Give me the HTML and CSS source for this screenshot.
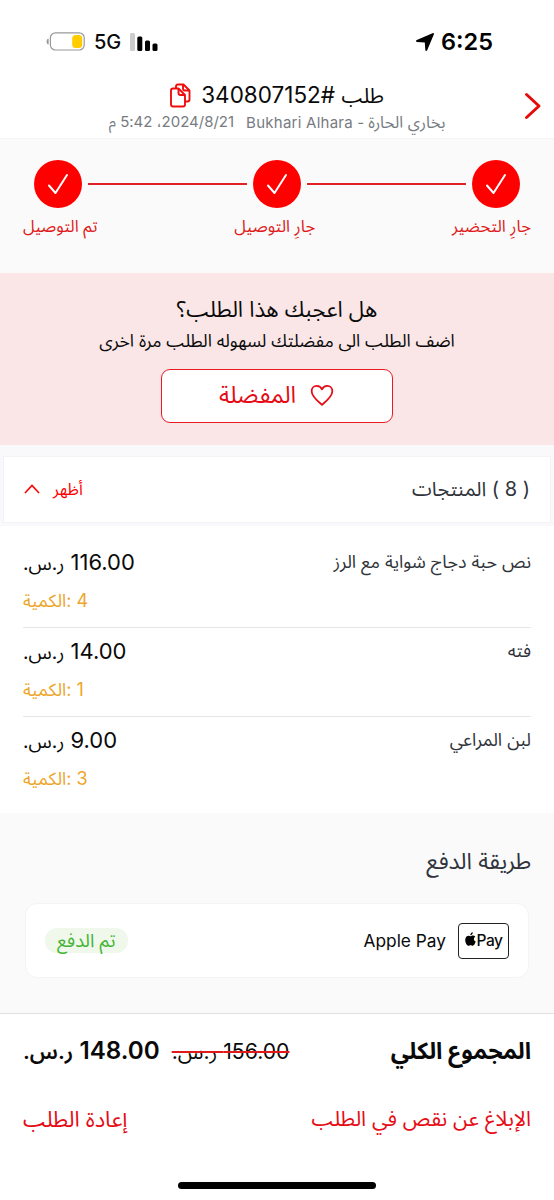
FILE: index.html
```html
<!DOCTYPE html>
<html lang="ar" dir="rtl">
<head>
<meta charset="utf-8">
<title>طلب #340807152</title>
<link rel="stylesheet" href="styles.css">
</head>
<body>
<div class="status">
  <div class="clock">
    <span>6:25</span>
    <svg width="20" height="20" viewBox="0 0 20 20"><path d="M17.500 1.200Q19.500.5 18.800 2.500L12.200 18.300Q11 20 10.300 18L9.800 10.600 2 10Q0 9.300 1.800 8.100Z"/></svg>
  </div>
  <div class="signal">
    <svg width="28" height="18" viewBox="0 0 28 18"><rect width="5" height="18" rx="1.5" fill="#ccc"/><rect x="7.3" y="3.5" width="5" height="14.5" rx="1.5"/><rect x="15" y="7.5" width="5" height="10.5" rx="1.5"/><rect x="22.5" y="10.5" width="5" height="7.5" rx="1.5"/></svg>
    <span class="net">5G</span>
    <svg width="39" height="19" viewBox="0 0 39 19"><rect x="4.400" y=".8" width="33.800" height="17.200" rx="5" fill="none" stroke="#999" stroke-width="1.200"/><rect x="26.200" y="3" width="10" height="13" rx="3.500" fill="#fc0"/><path d="M2.600 6.500v6Q.5 12 .5 9.500T2.600 6.500" fill="#999"/></svg>
  </div>
</div>

<header class="head">
  <svg class="back" width="18" height="28" viewBox="0 0 18 28"><path d="M2.500 2.500 15 14 2.500 25.500" fill="none" stroke="#e60b0b" stroke-width="3" stroke-linecap="round" stroke-linejoin="round"/></svg>
  <div class="title">
    <span><span class="t-word">طلب</span> #340807152</span>
    <svg width="21" height="25" viewBox="0 0 21 25" fill="none" stroke="#f20d0d" stroke-width="1.900" stroke-linejoin="round"><path d="M6 5V3.500Q6 1.500 8 1.500H13.500L19.500 7.500V16.500Q19.500 18.500 17.500 18.500H15"/><path d="M13 1.700V5.500Q13 7.500 15 7.500H19.500"/><path d="M3 5.500H8.500L15 12V21.500Q15 23.500 13 23.500H3Q1 23.500 1 21.500V7.500Q1 5.500 3 5.500Z"/><path d="M8.500 5.700V10Q8.500 12 10.500 12H15"/></svg>
  </div>
  <div class="sub"><span><span class="s-word">بخاري الحارة</span> - Bukhari Alhara</span><span class="date"><bdi dir="ltr">2024/8/21</bdi>، <bdi dir="ltr">5:42</bdi> م</span></div>
</header>

<section class="steps">
  <div class="track">
    <div class="dot"><svg width="22" height="22" viewBox="0 0 22 22"><path d="M2 12.500 8.500 20 20 2"/></svg></div>
    <div class="line"></div>
    <div class="dot"><svg width="22" height="22" viewBox="0 0 22 22"><path d="M2 12.500 8.500 20 20 2"/></svg></div>
    <div class="line"></div>
    <div class="dot"><svg width="22" height="22" viewBox="0 0 22 22"><path d="M2 12.500 8.500 20 20 2"/></svg></div>
  </div>
  <div class="labels"><span>جارِ التحضير</span><span>جارِ التوصيل</span><span>تم التوصيل</span></div>
</section>

<section class="fav">
  <h2 class="fav-q">هل اعجبك هذا الطلب؟</h2>
  <p class="fav-d">اضف الطلب الى مفضلتك لسهوله الطلب مرة اخرى</p>
  <div class="fav-btn">
    <svg width="24" height="23" viewBox="0 0 26 24"><path d="M13 22C10 19.500 1.800 13.500 1.800 7.500 1.800 4 4.200 1.700 7.300 1.700 10 1.700 12 3.300 13 5.300 14 3.300 16 1.700 18.700 1.700 21.800 1.700 24.200 4 24.200 7.500 24.200 13.500 16 19.500 13 22Z" fill="none" stroke="#e60b14" stroke-width="1.900" stroke-linejoin="round"/></svg>
    <span>المفضلة</span>
  </div>
</section>

<section class="prod-wrap">
  <div class="prod-head">
    <span class="prod-t">( 8 ) <span class="prod-w">المنتجات</span></span>
    <span class="show"><span>أظهر</span><svg width="16" height="10" viewBox="0 0 16 10"><path d="M1 9 8 1.500 15 9" fill="none" stroke="#f00" stroke-width="1.600"/></svg></span>
  </div>
</section>

<section class="items">
  <div class="item"><span class="name">نص حبة دجاج شواية مع الرز</span><div class="nums"><div class="price">116.00 <span class="cur">ر.س.</span></div><div class="qty">4 :<span class="q">الكمية</span></div></div></div>
  <div class="item"><span class="name">فته</span><div class="nums"><div class="price">14.00 <span class="cur">ر.س.</span></div><div class="qty">1 :<span class="q">الكمية</span></div></div></div>
  <div class="item"><span class="name">لبن المراعي</span><div class="nums"><div class="price">9.00 <span class="cur">ر.س.</span></div><div class="qty">3 :<span class="q">الكمية</span></div></div></div>
</section>

<section class="pay">
  <h3 class="pay-t">طريقة الدفع</h3>
  <div class="card">
    <div class="method">
      <div class="logo" dir="ltr"><svg width="11" height="14" viewBox="0 0 11 14"><path d="M7.800.3C7.900 1.900 6.700 3.200 5.300 3.200 5.200 1.800 6.400.5 7.800.3ZM10.300 4.700C8.300 5.900 8.600 8.700 10.800 9.600 10 11.900 8.900 13.700 7.700 13.700 6.900 13.700 6.600 13.200 5.600 13.200S4.300 13.700 3.600 13.700C2 13.700.2 10.600.2 7.900.2 5.200 1.900 3.700 3.600 3.700 4.500 3.700 5.200 4.200 5.700 4.200 6.200 4.200 7 3.600 8 3.600 8.900 3.600 9.700 4 10.300 4.700Z"/></svg><span>Pay</span></div>
      <span class="ap">Apple Pay</span>
    </div>
    <span class="paid">تم الدفع</span>
  </div>
</section>

<footer class="foot">
  <div class="total">
    <span class="tot-l">المجموع الكلي</span>
    <div class="sums"><span class="old">156.00 ر.س.</span><span class="new">148.00 <span class="newcur">ر.س.</span></span></div>
  </div>
  <div class="actions"><span class="a1">الإبلاغ عن نقص في الطلب</span><span class="a2">إعادة الطلب</span></div>
  <div class="home"></div>
</footer>
</body>
</html>
```
FILE: styles.css
```css
* { box-sizing: border-box; }
body { margin: 0; width: 554px; height: 1200px; overflow: hidden; background: #fff; color: #0a0a0a; font-family: Inter, "Noto Sans Arabic", "DejaVu Sans", sans-serif; }
h2, h3, p { margin: 0; font-weight: 400; }
svg { display: block; flex: none; }
span, div, h2, h3, p { white-space: nowrap; }

.status { height: 74px; padding: 26px 61px 0 46px; display: flex; justify-content: space-between; }
.clock { display: flex; align-items: center; gap: 6px; height: 31px; font-size: 23.500px; font-weight: 600; color: #000; }
.signal { display: flex; align-items: center; gap: 9px; height: 31px; }
.net { font-size: 20px; font-weight: 450; }

.head { position: relative; height: 65px; border-bottom: 1px solid #f5f5f5; }
.back { position: absolute; right: 12px; top: 18px; }
.title { display: flex; justify-content: center; align-items: center; gap: 10px; height: 34px; padding: 8px 0 0 0; font-size: 22.500px; line-height: 30px; }
.t-word { font-size: 20.500px; }
.sub { display: flex; justify-content: center; gap: 12px; font-size: 15px; line-height: 28px; color: #777b82; letter-spacing: .25px; }
.s-word { font-size: 16.200px; letter-spacing: 0; }
.date { letter-spacing: .6px; }

.steps { height: 134px; padding: 21px 23px 0; background: #fafafa; }
.track { display: flex; align-items: center; gap: 6px; padding: 0 11px; }
.dot { width: 48px; height: 48px; border-radius: 50%; background: #f00; display: grid; place-items: center; flex: none; }
.dot path { fill: none; stroke: #fff; stroke-width: 2; stroke-linecap: round; stroke-linejoin: round; }
.line { flex: 1; height: 2px; background: #e02222; }
.labels { display: flex; justify-content: space-between; padding-top: 4px; font-size: 16.600px; line-height: 28px; color: #e01a1a; }

.fav { height: 172px; background: #fae6e7; display: flex; flex-direction: column; align-items: center; padding-top: 19px; }
.fav-q { font-size: 21.900px; line-height: 34px; }
.fav-d { font-size: 17.500px; line-height: 30px; }
.fav-btn { margin-top: 13px; width: 232px; height: 54px; border: 1.500px solid #e81b23; border-radius: 9px; background: #fff; display: flex; align-items: center; justify-content: center; gap: 14px; padding: 0 1px 2px 0; color: #e60b14; font-size: 23.300px; line-height: 48px; }

.prod-wrap { padding: 11px 3px 0; height: 83px; background: linear-gradient(#f9f9fc 81px, #fff 81px); }
.prod-head { height: 67px; background: #fff; border: 1px solid #f3f3f7; padding: 0 20px 2px; display: flex; align-items: center; justify-content: space-between; }
.prod-t { font-size: 20px; line-height: 30px; color: #30333a; }
.show { display: flex; align-items: center; gap: 13px; color: #f00; font-size: 16.400px; line-height: 30px; }

.items { height: 285px; padding: 11px 23px 0; }
.item { height: 89px; padding-top: 7px; display: flex; justify-content: space-between; border-bottom: 1px solid #e6e6e6; }
.item:last-child { border: 0; }
.name { padding-top: 1px; font-size: 17.900px; line-height: 30px; color: #30333a; }
.nums { text-align: left; }
.price { font-size: 22px; line-height: 32px; }
.cur { font-size: 19.200px; }
.qty { margin-top: 6px; font-size: 18px; line-height: 32px; color: #eda529; }
.q { font-size: 17.700px; }

.pay { height: 201px; padding: 30px 25px 0; background: #fafafa; border-bottom: 1px solid #e0e0e0; }
.pay-t { margin-right: -2px; font-size: 22.700px; line-height: 36px; color: #30333a; }
.card { margin-top: 24px; height: 75px; border: 1px solid #f4f4f8; border-radius: 12px; background: #fff; padding: 0 19px; display: flex; align-items: center; justify-content: space-between; }
.method { display: flex; align-items: center; gap: 12px; }
.logo { width: 51px; height: 36px; border: 1.500px solid #222; border-radius: 4px; display: flex; align-items: center; justify-content: center; gap: 1px; font-size: 15.500px; font-weight: 500; letter-spacing: -.5px; }
.logo svg { margin-top: -3px; }
.ap { font-size: 17.300px; }
.paid { height: 25px; border-radius: 12px; background: #eff8eb; color: #45b534; padding: 0 12px; line-height: 24px; font-size: 18.600px; }

.foot { padding: 17px 23px 0; }
.total { display: flex; justify-content: space-between; align-items: center; height: 40px; }
.tot-l { font-size: 23.300px; line-height: 40px; font-weight: 700; }
.sums { display: flex; align-items: center; gap: 12px; line-height: 40px; }
.old { font-size: 21.200px; text-decoration: line-through #e01a1a 2px; }
.new { font-size: 24.200px; font-weight: 600; }
.newcur { font-size: 21.500px; }
.actions { display: flex; justify-content: space-between; margin-top: 28px; line-height: 40px; font-size: 21px; color: #e60b14; }
.a2 { font-size: 21.800px; }
.home { width: 198px; height: 7px; border-radius: 4px; background: #000; margin: 43px auto 0; }
```
